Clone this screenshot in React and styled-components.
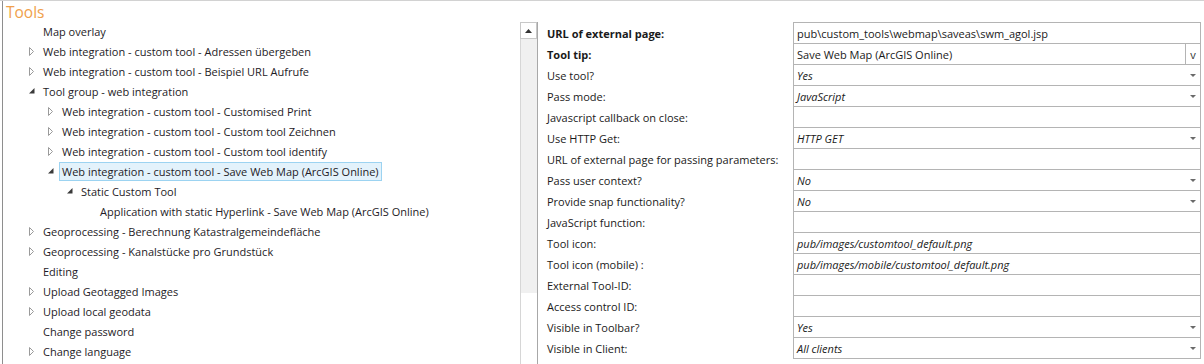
import React from "react";
import styled, { createGlobalStyle } from "styled-components";

const GlobalStyle = createGlobalStyle`
  html, body { margin: 0; padding: 0; background: #ffffff; }
  body { font-family: "Open Sans", "Noto Sans", sans-serif; }
  * { box-sizing: border-box; }
`;

const FONT = `"Open Sans", "Noto Sans", sans-serif`;

const Frame = styled.div`
  width: 1204px;
  height: 364px;
  overflow: hidden;
  display: flex;
  border-top: 1px solid #d2d2d2;
  background: #fff;
`;

const LeftPanel = styled.div`
  margin-left: 2px;
  width: 518px;
  height: 100%;
  border-left: 1px solid #8e8e8e;
  display: flex;
  flex-direction: column;
`;

const Title = styled.div`
  height: 20px;
  padding-left: 3px;
  font-family: ${FONT};
  font-size: 15.5px;
  line-height: 22px;
  color: #f0a04b;
`;

const Tree = styled.div`
  display: flex;
  flex-direction: column;
`;

const TreeRow = styled.div`
  height: 20px;
  display: flex;
  align-items: center;
  padding-left: ${(p) => 24 + p.$level * 19}px;
`;

const Toggle = styled.span`
  width: 16px;
  height: 20px;
  display: flex;
  align-items: center;
  padding-left: 2px;
  flex-shrink: 0;
`;

const Label = styled.span`
  font-family: ${FONT};
  font-size: 11px;
  color: #1e1b26;
  white-space: nowrap;
  line-height: 17px;
  padding: 0 2px;
  margin-left: -3px;
  border: 1px solid ${(p) => (p.$selected ? "#9cd3f1" : "transparent")};
  background: ${(p) => (p.$selected ? "#e3f2fb" : "transparent")};
`;

const Arrow = ({ state }) => {
  if (state === "collapsed")
    return (
      <svg width="6" height="9" viewBox="0 0 6 9">
        <path d="M0.5 0.5 L4.5 4.5 L0.5 8.5 Z" fill="none" stroke="#9a9a9a" strokeWidth="1" />
      </svg>
    );
  if (state === "expanded")
    return (
      <svg width="6" height="6" viewBox="0 0 6 6">
        <path d="M5.5 0 L5.5 5.5 L0 5.5 Z" fill="#3a3a3a" />
      </svg>
    );
  return null;
};

const RightPanel = styled.div`
  flex: 1;
  display: flex;
  padding-top: 21px;
`;

const ScrollBar = styled.div`
  width: 18px;
  height: 100%;
  display: flex;
  flex-direction: column;
  border-left: 1px solid #d6d6d6;
  border-right: 1px solid #a8a8a8;
`;

const ScrollButton = styled.div`
  height: 17px;
  width: 17px;
  margin-left: -1px;
  border: 1px solid #c8c8c8;
  background: #fff;
  display: flex;
  align-items: center;
  justify-content: center;
`;

const ScrollThumb = styled.div`
  height: 254px;
  background: #f0f0f0;
`;

const PropList = styled.div`
  display: flex;
  flex-direction: column;
`;

const PropRow = styled.div`
  display: grid;
  grid-template-columns: 255px 408px;
  height: ${(p) => (p.$first ? 22 : 21)}px;
`;

const PropLabel = styled.div`
  padding-left: 9px;
  display: flex;
  align-items: center;
  padding-top: ${(p) => (p.$first ? 1 : 0)}px;
  font-family: ${FONT};
  font-size: 11px;
  font-weight: ${(p) => (p.$bold ? 700 : 400)};
  color: #1a1a1a;
  white-space: nowrap;
`;

const ValueCell = styled.div`
  display: flex;
  align-items: center;
  border: 1px solid #b4b4b4;
  border-top: ${(p) => (p.$first ? "1px solid #b4b4b4" : "none")};
  font-family: ${FONT};
  font-size: 11px;
  font-style: ${(p) => (p.$italic ? "italic" : "normal")};
  color: #1a1a1a;
  white-space: nowrap;
`;

const ValueText = styled.span`
  flex: 1;
  padding-left: 3px;
`;

const DropArrow = styled.span`
  width: 14px;
  display: flex;
  align-items: center;
  justify-content: center;
`;

const VButton = styled.span`
  width: 15px;
  height: 100%;
  border-left: 1px solid #b4b4b4;
  display: flex;
  align-items: center;
  justify-content: center;
  font-family: ${FONT};
  font-size: 11px;
  color: #333;
`;

const treeItems = [
  { level: 0, state: null, text: "Map overlay" },
  { level: 0, state: "collapsed", text: "Web integration - custom tool - Adressen übergeben" },
  { level: 0, state: "collapsed", text: "Web integration - custom tool - Beispiel URL Aufrufe" },
  { level: 0, state: "expanded", text: "Tool group - web integration" },
  { level: 1, state: "collapsed", text: "Web integration - custom tool - Customised Print" },
  { level: 1, state: "collapsed", text: "Web integration - custom tool - Custom tool Zeichnen" },
  { level: 1, state: "collapsed", text: "Web integration - custom tool - Custom tool identify" },
  { level: 1, state: "expanded", text: "Web integration - custom tool - Save Web Map (ArcGIS Online)", selected: true },
  { level: 2, state: "expanded", text: "Static Custom Tool" },
  { level: 3, state: null, text: "Application with static Hyperlink - Save Web Map (ArcGIS Online)" },
  { level: 0, state: "collapsed", text: "Geoprocessing - Berechnung Katastralgemeindefläche" },
  { level: 0, state: "collapsed", text: "Geoprocessing - Kanalstücke pro Grundstück" },
  { level: 0, state: null, text: "Editing" },
  { level: 0, state: "collapsed", text: "Upload Geotagged Images" },
  { level: 0, state: "collapsed", text: "Upload local geodata" },
  { level: 0, state: null, text: "Change password" },
  { level: 0, state: "collapsed", text: "Change language" },
];

const props = [
  { label: "URL of external page:", bold: true, value: "pub\\custom_tools\\webmap\\saveas\\swm_agol.jsp" },
  { label: "Tool tip:", bold: true, value: "Save Web Map (ArcGIS Online)", vbutton: true },
  { label: "Use tool?", value: "Yes", italic: true, drop: true },
  { label: "Pass mode:", value: "JavaScript", italic: true, drop: true },
  { label: "Javascript callback on close:", value: "" },
  { label: "Use HTTP Get:", value: "HTTP GET", italic: true, drop: true },
  { label: "URL of external page for passing parameters:", value: "" },
  { label: "Pass user context?", value: "No", italic: true, drop: true },
  { label: "Provide snap functionality?", value: "No", italic: true, drop: true },
  { label: "JavaScript function:", value: "" },
  { label: "Tool icon:", value: "pub/images/customtool_default.png", italic: true },
  { label: "Tool icon (mobile) :", value: "pub/images/mobile/customtool_default.png", italic: true },
  { label: "External Tool-ID:", value: "" },
  { label: "Access control ID:", value: "" },
  { label: "Visible in Toolbar?", value: "Yes", italic: true, drop: true },
  { label: "Visible in Client:", value: "All clients", italic: true, drop: true },
];

export default function App() {
  return (
    <>
      <GlobalStyle />
      <Frame>
        <LeftPanel>
          <Title>Tools</Title>
          <Tree>
            {treeItems.map((it, i) => (
              <TreeRow key={i} $level={it.level}>
                <Toggle>
                  <Arrow state={it.state} />
                </Toggle>
                <Label $selected={it.selected}>{it.text}</Label>
              </TreeRow>
            ))}
          </Tree>
        </LeftPanel>
        <RightPanel>
          <ScrollBar>
            <ScrollButton>
              <svg width="7" height="4" viewBox="0 0 7 4">
                <path d="M0 4 L3.5 0 L7 4 Z" fill="#333" />
              </svg>
            </ScrollButton>
            <ScrollThumb />
          </ScrollBar>
          <PropList>
            {props.map((p, i) => (
              <PropRow key={i} $first={i === 0}>
                <PropLabel $bold={p.bold} $first={i === 0}>{p.label}</PropLabel>
                <ValueCell $first={i === 0} $italic={p.italic}>
                  <ValueText>{p.value}</ValueText>
                  {p.drop && (
                    <DropArrow>
                      <svg width="6" height="3" viewBox="0 0 6 3">
                        <path d="M0 0 L6 0 L3 3 Z" fill="#6a6a6a" />
                      </svg>
                    </DropArrow>
                  )}
                  {p.vbutton && <VButton>v</VButton>}
                </ValueCell>
              </PropRow>
            ))}
          </PropList>
        </RightPanel>
      </Frame>
    </>
  );
}
